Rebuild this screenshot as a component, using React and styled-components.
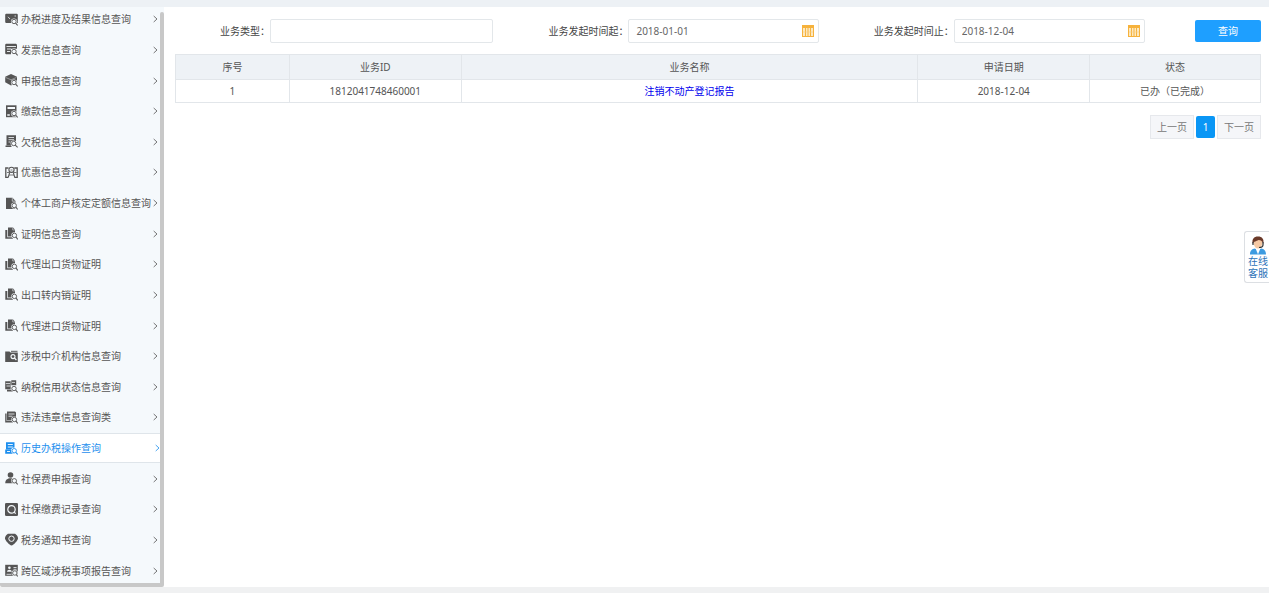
import React, { useState } from 'react';
import styled, { createGlobalStyle } from 'styled-components';

const menu = [
  { icon: 'progress', title: '办税进度及结果信息查询' },
  { icon: 'invoice', title: '发票信息查询' },
  { icon: 'declare', title: '申报信息查询' },
  { icon: 'payment', title: '缴款信息查询' },
  { icon: 'arrears', title: '欠税信息查询' },
  { icon: 'discount', title: '优惠信息查询' },
  { icon: 'quota', title: '个体工商户核定定额信息查询' },
  { icon: 'proof', title: '证明信息查询' },
  { icon: 'proof', title: '代理出口货物证明' },
  { icon: 'proof', title: '出口转内销证明' },
  { icon: 'proof', title: '代理进口货物证明' },
  { icon: 'agency', title: '涉税中介机构信息查询' },
  { icon: 'credit', title: '纳税信用状态信息查询' },
  { icon: 'illegal', title: '违法违章信息查询类' },
  { icon: 'history', title: '历史办税操作查询' },
  { icon: 'person', title: '社保费申报查询' },
  { icon: 'record', title: '社保缴费记录查询' },
  { icon: 'notice', title: '税务通知书查询' },
  { icon: 'region', title: '跨区域涉税事项报告查询' },
];

const rows = [
  { id: '1812041748460001', name: '注销不动产登记报告', date: '2018-12-04', status: '已办（已完成）' },
];

/**
 * Small magnifier in the lower right corner of most menu icons
 */
function Lens({ bg, cx = 9, cy = 8.5 }) {
  return (
    <g>
      <circle cx={cx} cy={cy} r="3.1" fill={bg} />
      <path d={`M${cx + 1.6} ${cy + 1.6}L12.7 12.4`} stroke={bg} strokeWidth="2.2" />
      <circle cx={cx} cy={cy} r="2.2" fill="none" stroke="currentColor" strokeWidth=".9" />
      <path d={`M${cx + 1.6} ${cy + 1.6}L12.7 12.4`} stroke="currentColor" strokeWidth="1.1" />
    </g>
  );
}

function renderShape(name, bg) {
  switch (name) {
    case 'progress':
      return (
        <g>
          <path d="M1 .8h11l.8.8V10H1l-.8-.8V1.6z" />
          <path d="M3 3.8l2 2.2M9.5 3h1.500" stroke={bg} strokeWidth=".8" fill="none" />
          <Lens bg={bg} />
        </g>
      );
    case 'invoice':
      return (
        <g>
          <path d="M1 .8h10l1 1v4H6v5.400H1l-.8-.8V1.600z" />
          <path d="M1.500 3.500h9.500M2 6h4M2 8.500h3" stroke={bg} strokeWidth=".9" />
          <Lens bg={bg} />
        </g>
      );
    case 'declare':
      return (
        <g>
          <path d="M6 0l6 2.800v5.500L6 11.600.2 8.300V2.800z" />
          <path d="M.5 3.400L6 5.800l5.500-2.400" stroke={bg} strokeWidth=".4" fill="none" />
          <Lens bg={bg} />
        </g>
      );
    case 'payment':
      return (
        <g>
          <path d="M1 .3h10.500v11.900H1z" />
          <path d="M2.500 2h7.500v2H2.500zM2.300 9.300h2.500v1.400H2.300z" fill={bg} />
          <Lens bg={bg} />
        </g>
      );
    case 'arrears':
      return (
        <g>
          <path d="M1.500 .3h9.500v10H1.500zM.5 10.500h6v1.500h-6z" />
          <path d="M3.500 2.500h5.500M3.500 4.700h5.500M3.500 7h2" stroke={bg} strokeWidth=".8" />
          <Lens bg={bg} cx={8.7} />
        </g>
      );
    case 'discount':
      return (
        <g fill="none" stroke="currentColor">
          <path d="M3.500 2H.8v9.300h2.400M9.300 2h2.900v9.300H9.500" strokeWidth="1.300" />
          <circle cx="6.500" cy="3.800" r="2.600" strokeWidth="1.100" />
          <path d="M4.800 6.200L3.200 11.500M8.200 6.200l1.600 5.300" strokeWidth="1.100" />
          <path d="M4 9h5M2 6.500h2M9 6.500h2.500M5.500 4h2" strokeWidth=".8" />
        </g>
      );
    case 'quota':
      return (
        <g>
          <path d="M1 .8h6.500L10.500 4v8H1z" />
          <path d="M7.300 1v3.200h3" stroke={bg} strokeWidth=".6" fill="none" />
          <Lens bg={bg} cx={9.2} />
        </g>
      );
    case 'proof':
      return (
        <g>
          <path d="M3 .5h5l2 2.200V9.500H3z" />
          <path d="M.3 3h2v7.300H8v1.500H.3z" />
          <path d="M7.700 .7v2.300h2.200" stroke={bg} strokeWidth=".5" fill="none" />
          <Lens bg={bg} cx={9.4} cy={8.4} />
        </g>
      );
    case 'agency':
      return (
        <g>
          <path d="M.2 1.500h4.300l1 1h7.300V12H.2z" />
          <path d="M6 .8h6.500v1H6z" />
          <circle cx="8" cy="6.600" r="2" fill="none" stroke={bg} strokeWidth="1.100" />
          <path d="M9.400 8l2 2" stroke={bg} strokeWidth="1.100" />
        </g>
      );
    case 'credit':
      return (
        <g>
          <path d="M.2 1.300h5.500v8H.2zM6.300 .3h4.900v5H6.300zM2 9.800h6v1.800H2z" />
          <path d="M.8 3.600h4.300M1.500 6h4M7 2.400h3" stroke={bg} strokeWidth=".8" />
          <Lens bg={bg} />
        </g>
      );
    case 'illegal':
      return (
        <g>
          <path d="M2 .5h8l1 1v8H2zM.2 2.500h1.400v7.500H8v1.500H.2z" />
          <path d="M3.500 3h6M3.500 5.200h4" stroke={bg} strokeWidth=".8" />
          <Lens bg={bg} cx={9.4} />
        </g>
      );
    case 'history':
      return (
        <g>
          <path d="M1 .3h8.500v7H1zM.2 7.500h9v4.300h-9z" />
          <path d="M2.800 2.500h5M2.800 5h5M2 9.500h3" stroke={bg} strokeWidth=".9" />
          <Lens bg={bg} cx={9.2} cy={8.7} />
        </g>
      );
    case 'person':
      return (
        <g>
          <circle cx="5.500" cy="3" r="2.800" />
          <path d="M.2 11.300C.2 8.200 2 7 4 6.300h3c2 .7 3.300 2 3.300 5z" />
          <Lens bg={bg} cx={9.3} cy={8.8} />
        </g>
      );
    case 'record':
      return (
        <g>
          <rect width="13" height="13" rx="1.300" />
          <circle cx="6.500" cy="6.400" r="3.700" fill="none" stroke={bg} strokeWidth="1.200" />
          <path d="M8.900 8.900l1.800 1.800" stroke={bg} strokeWidth="1.200" />
        </g>
      );
    case 'notice':
      return (
        <g>
          <path d="M3.500 .8h6c1.500 0 3.500 2.700 3.500 4.400C13 7.500 8.500 12 6.500 12.500 4.500 12 0 7.500 0 5.200 0 3.500 2 .8 3.500 .8z" />
          <circle cx="6.500" cy="5.700" r="2.700" fill="none" stroke={bg} strokeWidth="1" />
        </g>
      );
    default:
      return (
        <g>
          <path d="M.2 .8h12.600v11H.2z" />
          <path d="M8.500 3.500h3M8.500 5.300h3M1.500 10.300h5" stroke={bg} strokeWidth=".8" />
          <circle cx="4.400" cy="3.700" r="1.300" fill={bg} />
          <path d="M2 7.800c0-2.800 4.800-2.800 4.800 0z" fill={bg} />
          <Lens bg={bg} cx={9.8} cy={9} />
        </g>
      );
  }
}

function MenuIcon({ name, bg }) {
  return (
    <svg width="13" height="13" viewBox="0 0 13 13" fill="currentColor" aria-hidden="true">
      {renderShape(name, bg)}
    </svg>
  );
}

function CalendarIcon() {
  return (
    <svg width="12" height="12" viewBox="0 0 12 12" aria-hidden="true">
      <rect x=".5" y=".5" width="11" height="11" fill="#fde9c0" stroke="#f6b23c" />
      <path d="M0 2h12" stroke="#f6b23c" strokeWidth="2" />
      <path d="M3.500 3v8M6 3v8M8.500 3v8" stroke="#f6b23c" />
      <path d="M1 7h10" stroke="#f9cf85" strokeWidth=".6" />
    </svg>
  );
}

function AgentIcon() {
  return (
    <svg width="18" height="19" viewBox="0 0 18 19" aria-hidden="true">
      <path d="M1 18.500c0-4 2-5.500 5-6l3 2 3-2c3 .5 5 2 5 6z" fill="#3d9be0" />
      <path d="M6.500 12l2.500 6.500 2.500-6.500z" fill="#fff" />
      <ellipse cx="9" cy="7" rx="4.300" ry="5.500" fill="#f6c9a4" />
      <path d="M3.800 8C2.500 3 5 .5 9 .5S15.500 3 14.200 8C13.500 5.500 12 4 9.500 4 7 5.500 5 5 3.800 8z" fill="#6b3a2a" />
      <path d="M4 6v3M14 6v3c0 2-1.500 2.500-4 2.500" stroke="#333" strokeWidth="1.200" fill="none" />
    </svg>
  );
}

function Sidebar() {
  const [active, setActive] = useState(14);
  return (
    <Side>
      <SideBody>
        <MenuList>
          {menu.map((item, index) => (
            <MenuItem key={item.title} $active={index === active}>
              <MenuLink href="#" $active={index === active} onClick={() => setActive(index)}>
                <MenuIcon name={item.icon} bg={index === active ? '#ffffff' : '#f5f9fc'} />
                <MenuTitle>{item.title}</MenuTitle>
                <Arrow width="5" height="8" viewBox="0 0 5 8" aria-hidden="true">
                  <path d="M.7 1L4 4 .7 7" />
                </Arrow>
              </MenuLink>
            </MenuItem>
          ))}
        </MenuList>
        <ScrollTrack />
      </SideBody>
      <ScrollFoot />
    </Side>
  );
}

function App() {
  return (
    <Page>
      <GlobalStyle />
      <Sidebar />
      <Content>
        <Filters onSubmit={(e) => e.preventDefault()}>
          <Label htmlFor="type">业务类型：</Label>
          <Field>
            <Input id="type" type="text" />
          </Field>
          <Label htmlFor="from">业务发起时间起：</Label>
          <Field>
            <Input id="from" type="text" defaultValue="2018-01-01" />
            <CalendarIcon />
          </Field>
          <Label htmlFor="to">业务发起时间止：</Label>
          <Field>
            <Input id="to" type="text" defaultValue="2018-12-04" />
            <CalendarIcon />
          </Field>
          <Search type="submit">查询</Search>
        </Filters>
        <Table>
          <colgroup>
            <Col $share={114} />
            <Col $share={172} />
            <Col $share={457} />
            <Col $share={172} />
            <Col $share={171} />
          </colgroup>
          <thead>
            <tr>
              <Th>序号</Th>
              <Th>业务ID</Th>
              <Th>业务名称</Th>
              <Th>申请日期</Th>
              <Th>状态</Th>
            </tr>
          </thead>
          <tbody>
            {rows.map((row, index) => (
              <tr key={row.id}>
                <Td>{index + 1}</Td>
                <Td>{row.id}</Td>
                <Td>
                  <NameLink href="#">{row.name}</NameLink>
                </Td>
                <Td>{row.date}</Td>
                <Td>{row.status}</Td>
              </tr>
            ))}
          </tbody>
        </Table>
        <Pager>
          <PageButton type="button">上一页</PageButton>
          <PageButton type="button" $current>1</PageButton>
          <PageButton type="button">下一页</PageButton>
        </Pager>
      </Content>
      <Service href="#">
        <AgentIcon />
        <span>在线</span>
        <span>客服</span>
      </Service>
    </Page>
  );
}

export default App;

const GlobalStyle = createGlobalStyle`
  * {
    box-sizing: border-box;
  }

  body {
    margin: 0;
    color: #555555;
    background-color: #ffffff;
  }

  body, input, button {
    font-family: "Noto Sans", "Noto Sans CJK SC", sans-serif;
    font-size: 10px;
    line-height: 14px;
  }
`;

const Page = styled.div`
  display: flex;
  min-height: 100vh;
  border-top: 7px solid #edf1f5;
  border-bottom: 6px solid #f0f1f2;
`;

const Side = styled.nav`
  display: flex;
  flex-direction: column;
  flex: none;
  width: 164px;
`;

const SideBody = styled.div`
  display: flex;
  flex: 1;
  overflow: hidden;
  background-color: #f5f9fc;
`;

const MenuList = styled.ul`
  display: flex;
  flex-direction: column;
  flex: 1;
  min-width: 0;
  margin: -3px 0;
  padding: 0;
  list-style: none;
`;

const MenuItem = styled.li`
  display: flex;
  flex: 1 0 30px;
  border: solid ${(props) => (props.$active ? '#dfe5ea' : 'transparent')};
  border-width: 1px 0;
  background-color: ${(props) => (props.$active ? '#ffffff' : 'transparent')};
`;

const MenuLink = styled.a`
  display: flex;
  align-items: center;
  flex: 1;
  gap: 3px;
  min-width: 0;
  padding: 0 ${(props) => (props.$active ? 0 : 2)}px 0 5px;
  color: ${(props) => (props.$active ? '#1e8fee' : '#555555')};
  text-decoration: none;

  svg {
    flex: none;
  }
`;

const MenuTitle = styled.span`
  flex: 1;
  min-width: 0;
  white-space: nowrap;
`;

const Arrow = styled.svg`
  fill: none;
  stroke: currentColor;
  opacity: 0.8;
`;

const ScrollTrack = styled.div`
  flex: none;
  width: 4px;
  margin-top: 5px;
  border-radius: 2px 2px 0 0;
  background-color: #c8c8c8;
`;

const ScrollFoot = styled.div`
  height: 4px;
  border-radius: 0 0 2px 2px;
  background-color: #c8c8c8;
`;

const Content = styled.main`
  flex: 1;
  padding: 12px 8px 12px 11px;
`;

const Filters = styled.form`
  display: grid;
  grid-template-columns: 95fr 223fr 135fr 190fr 135fr 191fr 116fr;
  align-items: center;
  margin-bottom: 11px;
`;

const Label = styled.label`
  color: #444444;
  text-align: right;
  white-space: nowrap;
`;

const Field = styled.div`
  display: flex;
  align-items: center;
  height: 24px;
  padding: 0 4px 0 7px;
  border: 1px solid #e3e7ea;
  border-radius: 2px;
`;

const Input = styled.input`
  flex: 1;
  min-width: 0;
  padding: 0;
  border: 0;
  outline: 0;
  color: #666666;
  background: transparent;
`;

const Search = styled.button`
  justify-self: end;
  width: 66px;
  height: 22px;
  padding: 0;
  border: 0;
  border-radius: 2px;
  color: #ffffff;
  background-color: #1e9fff;
`;

const Table = styled.table`
  width: 100%;
  table-layout: fixed;
  border-collapse: collapse;
  text-align: center;
`;

const Col = styled.col`
  width: ${(props) => (props.$share / 1086) * 100}%;
`;

const Th = styled.th`
  height: 25px;
  padding: 0;
  border: 1px solid #e2e6ea;
  font-weight: normal;
  background-color: #eef2f6;
`;

const Td = styled.td`
  height: 23px;
  padding: 0;
  border: 1px solid #e2e6ea;
`;

const NameLink = styled.a`
  color: #0000ee;
  text-decoration: none;
`;

const Pager = styled.div`
  display: flex;
  align-items: center;
  justify-content: flex-end;
  gap: 2px;
  margin-top: 12px;
`;

const PageButton = styled.button`
  width: ${(props) => (props.$current ? 19 : 44)}px;
  height: ${(props) => (props.$current ? 22 : 24)}px;
  padding: 0;
  border: ${(props) => (props.$current ? '0' : '1px solid #e6e8ec')};
  border-radius: ${(props) => (props.$current ? 2 : 0)}px;
  color: ${(props) => (props.$current ? '#ffffff' : '#777777')};
  background-color: ${(props) => (props.$current ? '#0a96f5' : '#f5f6f9')};
`;

const Service = styled.a`
  position: fixed;
  top: 231px;
  right: 0;
  display: flex;
  flex-direction: column;
  align-items: center;
  width: 25px;
  padding: 4px 0 3px 2px;
  border: 1px solid #dcdfe3;
  border-right: 0;
  border-radius: 3px 0 0 3px;
  color: #2b72b8;
  background-color: #ffffff;
  line-height: 12px;
  text-decoration: none;
`;
